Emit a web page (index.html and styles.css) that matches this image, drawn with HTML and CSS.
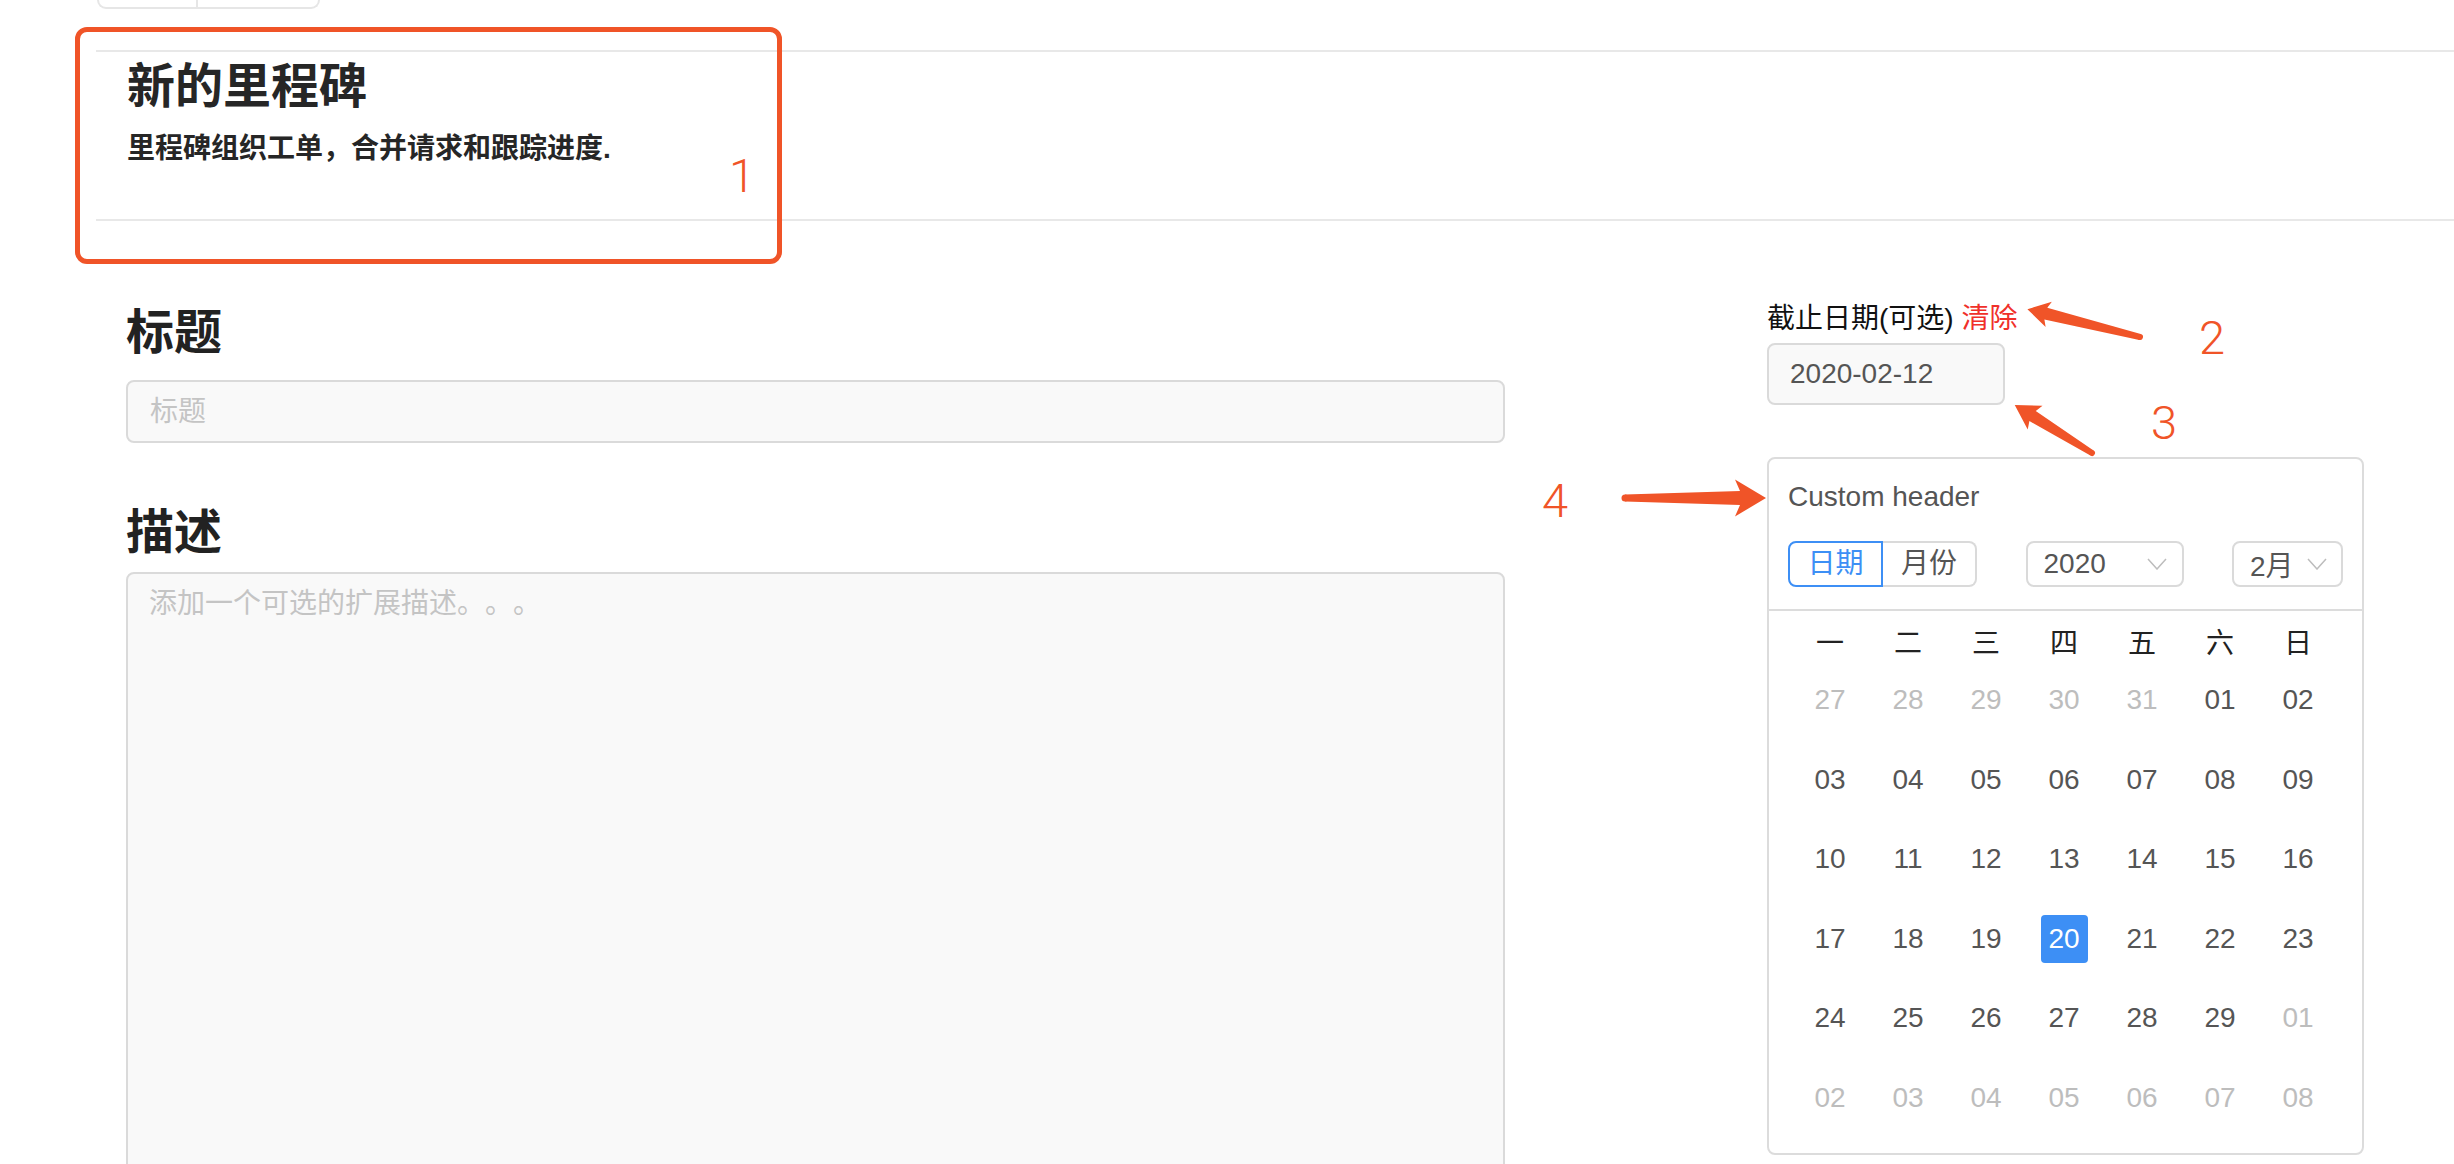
FILE: index.html
```html
<!DOCTYPE html>
<html lang="zh-CN">
<head>
    <meta charset="UTF-8">
    <meta name="viewport" content="width=device-width, initial-scale=1.0">
    <title>新的里程碑</title>
    <link rel="stylesheet" href="styles.css">
</head>
<body>

<div class="top-tabs">
    <span class="top-tab"></span>
    <span class="top-tab"></span>
</div>

<div class="page-head">
    <h1>新的里程碑</h1>
    <p>里程碑组织工单，合并请求和跟踪进度.</p>
</div>

<div class="form">
    <div class="form-main">
        <h2 class="field-title">标题</h2>
        <input class="text-input" type="text" placeholder="标题">
        <h2 class="field-title field-title-desc">描述</h2>
        <textarea class="text-area" placeholder="添加一个可选的扩展描述。。。"></textarea>
    </div>

    <div class="form-side">
        <div class="due-label">截止日期(可选) <a class="clear-link">清除</a></div>
        <div class="date-input">2020-02-12</div>

        <div class="calendar">
            <div class="cal-head">
                <div class="cal-title">Custom header</div>
                <div class="cal-tools">
                    <div class="seg">
                        <span class="seg-btn active">日期</span>
                        <span class="seg-btn">月份</span>
                    </div>
                    <div class="select select-year">
                        <span>2020</span>
                        <svg class="chevron" width="20" height="12" viewBox="0 0 20 12"><polyline points="1,1 10,11 19,1" fill="none" stroke="#bdbdbd" stroke-width="1.5"/></svg>
                    </div>
                    <div class="select select-month">
                        <span>2月</span>
                        <svg class="chevron" width="20" height="12" viewBox="0 0 20 12"><polyline points="1,1 10,11 19,1" fill="none" stroke="#bdbdbd" stroke-width="1.5"/></svg>
                    </div>
                </div>
            </div>

            <div class="week-row">
                <span>一</span><span>二</span><span>三</span><span>四</span><span>五</span><span>六</span><span>日</span>
            </div>
            <div class="days">
                <span class="day muted">27</span><span class="day muted">28</span><span class="day muted">29</span><span class="day muted">30</span><span class="day muted">31</span><span class="day">01</span><span class="day">02</span>
                <span class="day">03</span><span class="day">04</span><span class="day">05</span><span class="day">06</span><span class="day">07</span><span class="day">08</span><span class="day">09</span>
                <span class="day">10</span><span class="day">11</span><span class="day">12</span><span class="day">13</span><span class="day">14</span><span class="day">15</span><span class="day">16</span>
                <span class="day">17</span><span class="day">18</span><span class="day">19</span><span class="day selected">20</span><span class="day">21</span><span class="day">22</span><span class="day">23</span>
                <span class="day">24</span><span class="day">25</span><span class="day">26</span><span class="day">27</span><span class="day">28</span><span class="day">29</span><span class="day muted">01</span>
                <span class="day muted">02</span><span class="day muted">03</span><span class="day muted">04</span><span class="day muted">05</span><span class="day muted">06</span><span class="day muted">07</span><span class="day muted">08</span>
            </div>
        </div>
    </div>
</div>

<!-- пометки поверх скриншота -->
<div class="note-box"></div>
<span class="note-num note-1">1</span>
<span class="note-num note-2">2</span>
<span class="note-num note-3">3</span>
<span class="note-num note-4">4</span>
<svg class="note-arrows" width="2454" height="1164" viewBox="0 0 2454 1164">
    <g transform="translate(1625,498)">
        <circle r="3.5" fill="#f05428"/>
        <polygon points="0,-3.5 115,-7 110,-18.5 141,0 110,18.5 115,7 0,3.5" fill="#f05428"/>
    </g>
    <g transform="translate(2140,337) rotate(193.9)">
        <circle r="3" fill="#f05428"/>
        <polygon points="0,-3 97,-6 94,-13 116,0 94,13 97,6 0,3" fill="#f05428"/>
    </g>
    <g transform="translate(2092,453) rotate(211.9)">
        <circle r="3" fill="#f05428"/>
        <polygon points="0,-3 70,-6 67,-14 91,0 67,14 70,6 0,3" fill="#f05428"/>
    </g>
</svg>

</body>
</html>
```

FILE: styles.css
```css
body {
    margin: 0;
    font-family: "Liberation Sans", "Noto Sans CJK SC", sans-serif;
    background-color: #fff;
    color: #262626;
    overflow: hidden;
    text-spacing-trim: space-all;
}

.top-tabs {
    display: flex;
    width: 223px;
    height: 9px;
    margin-left: 97px;
    box-sizing: border-box;
    border: 2px solid #e6e6e6;
    border-top: none;
    border-radius: 0 0 10px 10px;
}

.top-tab {
    width: 97px;
    border-right: 2px solid #e6e6e6;
}

.top-tab + .top-tab {
    border-right: none;
}

.page-head {
    margin: 41px 0 0 96px;
    padding: 5px 0 0 31px;
    height: 162px;
    border-top: 2px solid #e8e8e8;
    border-bottom: 2px solid #e8e8e8;
}

.page-head h1 {
    margin: 0;
    font-size: 48px;
    line-height: 60px;
    font-weight: bold;
}

.page-head p {
    margin: 12px 0 0;
    font-size: 28px;
    line-height: 40px;
    font-weight: bold;
}

.form {
    display: flex;
    align-items: flex-start;
    gap: 262px;
    padding: 78px 0 0 126px;
}

.form-main {
    width: 1379px;
}

.field-title {
    margin: 4px 0 17px;
    font-size: 48px;
    line-height: 60px;
    font-weight: bold;
    color: #222;
}

.field-title-desc {
    margin: 60px 0 9px;
}

.text-input,
.text-area {
    display: block;
    width: 100%;
    box-sizing: border-box;
    border: 2px solid #dadada;
    border-radius: 8px;
    background-color: #f9f9f9;
    font-family: inherit;
    font-size: 28px;
    color: #555;
    outline: none;
    text-spacing-trim: space-all;
}

.text-input {
    height: 63px;
    padding: 0 22px;
}

.text-area {
    height: 640px;
    padding: 10px 21px;
    line-height: 40px;
    resize: none;
}

.text-input::placeholder,
.text-area::placeholder {
    color: #c4c4c4;
}

.form-side {
    width: 597px;
}

.due-label {
    font-size: 28px;
    line-height: 40px;
    color: #111;
}

.clear-link {
    color: #f0302a;
    cursor: pointer;
}

.date-input {
    width: 238px;
    height: 62px;
    margin-top: 4px;
    box-sizing: border-box;
    padding-left: 21px;
    border: 2px solid #dadada;
    border-radius: 8px;
    background-color: #f9f9f9;
    font-size: 28px;
    line-height: 58px;
    color: #555;
}

.calendar {
    margin-top: 52px;
    width: 597px;
    height: 698px;
    box-sizing: border-box;
    border: 2px solid #dcdcdc;
    border-radius: 8px;
    background-color: #fff;
}

.cal-head {
    padding: 18px 19px 22px;
    border-bottom: 2px solid #dcdcdc;
}

.cal-title {
    font-size: 28px;
    line-height: 40px;
    color: #555;
}

.cal-tools {
    display: flex;
    justify-content: space-between;
    margin-top: 24px;
}

.seg {
    display: flex;
}

.seg-btn {
    width: 95px;
    height: 46px;
    box-sizing: border-box;
    border: 2px solid #dadada;
    font-size: 28px;
    line-height: 42px;
    text-align: center;
    color: #555;
}

.seg-btn:first-child {
    border-radius: 8px 0 0 8px;
}

.seg-btn:last-child {
    width: 94px;
    border-left: none;
    border-radius: 0 8px 8px 0;
}

.seg-btn.active {
    border-color: #3d8ff5;
    color: #3d8ff5;
}

.select {
    display: flex;
    align-items: center;
    justify-content: space-between;
    height: 46px;
    box-sizing: border-box;
    border: 2px solid #dadada;
    border-radius: 8px;
    font-size: 28px;
    color: #555;
}

.select-year {
    width: 158px;
    padding: 0 15px 0 16px;
}

.select-month {
    width: 111px;
    padding: 0 14px 0 16px;
}

.week-row,
.days {
    display: grid;
    grid-template-columns: repeat(7, 78px);
    padding-left: 22px;
}

.week-row {
    margin-top: 9px;
    margin-bottom: 8px;
}

.week-row span {
    height: 48px;
    line-height: 48px;
    text-align: center;
    font-size: 28px;
    color: #222;
}

.days {
    row-gap: 31.6px;
    justify-items: center;
}

.day {
    width: 47px;
    height: 48px;
    line-height: 48px;
    text-align: center;
    font-size: 28px;
    color: #555;
    border-radius: 4px;
}

.day.muted {
    color: #bdbdbd;
}

.day.selected {
    background-color: #3d8ff5;
    color: #fff;
}

.note-box {
    position: absolute;
    left: 75px;
    top: 27px;
    width: 707px;
    height: 237px;
    box-sizing: border-box;
    border: 5px solid #f05428;
    border-radius: 12px;
}

.note-num {
    position: absolute;
    font-family: Roboto, "Liberation Sans", sans-serif;
    font-weight: 300;
    font-size: 47px;
    line-height: 47px;
    color: #f05428;
}

.note-1 { left: 729px; top: 152px; }
.note-2 { left: 2199px; top: 314px; }
.note-3 { left: 2151px; top: 399px; }
.note-4 { left: 1542px; top: 477px; }

.note-arrows {
    position: absolute;
    left: 0;
    top: 0;
    pointer-events: none;
}
```
